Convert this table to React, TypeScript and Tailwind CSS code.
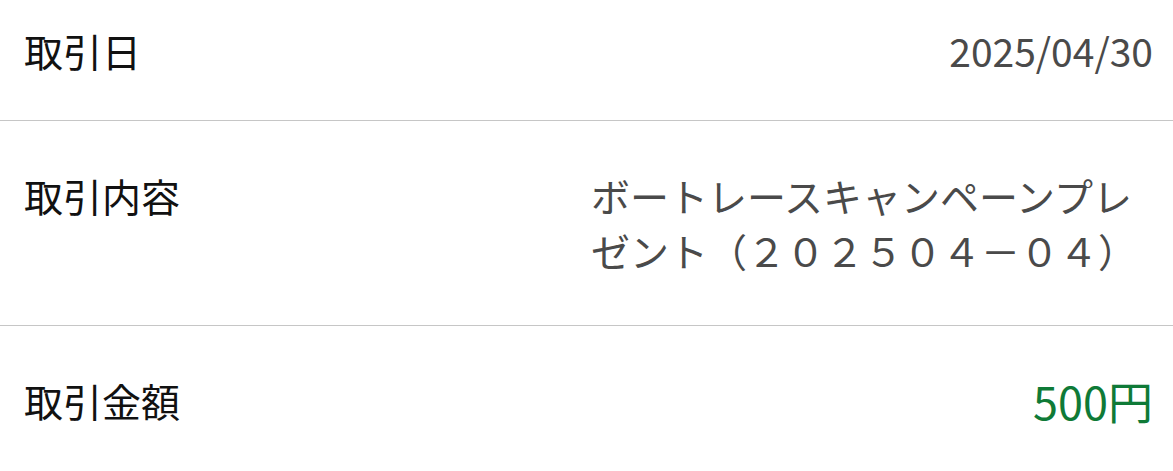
import React from "react";

const font = { fontFamily: '"Noto Sans CJK JP", "Noto Sans", sans-serif' };

export default function App() {
  return (
    <div className="w-[1173px] h-[471px] overflow-hidden bg-white" style={font}>
      <div className="flex items-start justify-between border-b border-[#c6c6c6] pl-[24px] pr-[20px] pt-[23px] pb-[42px] text-[39px] leading-[55px]">
        <div className="text-[#111111] shrink-0">取引日</div>
        <div className="text-[#4a4a4a]">2025/04/30</div>
      </div>
      <div className="flex items-start justify-between border-b border-[#c6c6c6] pl-[24px] pr-[20px] py-[47px] text-[39px] leading-[55px]">
        <div className="text-[#111111] shrink-0">取引内容</div>
        <div className="text-[#4a4a4a] max-w-[562px] text-left">
          ボートレースキャンペーンプレゼント（２０２５０４－０４）
        </div>
      </div>
      <div className="flex items-center justify-between pl-[24px] pr-[20px] py-[47px] text-[39px] leading-[55px]">
        <div className="text-[#111111] shrink-0">取引金額</div>
        <div className="text-[#0f7a37] text-[45px] leading-[55px]">500円</div>
      </div>
    </div>
  );
}
